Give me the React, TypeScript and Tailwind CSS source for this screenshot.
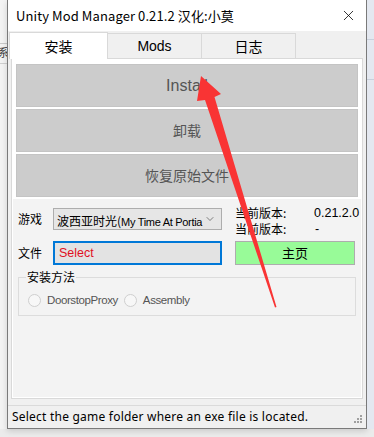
import { X, ChevronDown } from 'lucide-react';

const ui = { fontFamily: '"Noto Sans CJK SC", "Noto Sans", sans-serif' };
const ms = { fontFamily: '"Liberation Sans", "Noto Sans CJK SC", sans-serif' };

function BigButton({ label, latin }: { label: string; latin?: boolean }) {
  return (
    <div
      className={`h-[43px] bg-[#cccccc] border border-[#c4c4c4] flex items-center justify-center text-[#555555] ${latin ? 'text-[16px]' : 'text-[14px]'}`}
      style={latin ? ms : ui}
    >
      {label}
    </div>
  );
}

function Radio({ label }: { label: string }) {
  return (
    <div className="flex items-center gap-[6px]">
      <span className="w-[13px] h-[13px] rounded-full border border-[#cfcfcf] bg-[#f7f7f7]" />
      <span className="text-[11.5px] text-[#555555] tracking-[-0.4px]" style={ms}>{label}</span>
    </div>
  );
}

function Arrow() {
  return (
    <svg className="absolute left-0 top-0 pointer-events-none" width="374" height="437" viewBox="0 0 374 437">
      <polygon
        points="201,76 221,94 214.5,97 276.5,307 275,307.5 205,100 197,101"
        fill="#f93434"
      />
    </svg>
  );
}

export default function App() {
  return (
    <div className="relative w-[374px] h-[437px] overflow-hidden bg-[#ebebeb] flex" style={ui}>
      {/* desktop behind the window */}
      <div className="w-[7px] h-[429px] bg-[#f3f3f3] flex flex-col overflow-hidden">
        <div className="h-[44px] border-b border-[#c9c9c9]" />
        <div className="text-[11px] leading-[14px] text-[#333] whitespace-nowrap -ml-[2px] mt-[1px]">系吗</div>
        <div className="mt-[4px] border-b border-[#cfcfcf]" />
      </div>

      <div className="w-[360px] h-[429px] border-x border-b border-[#7a7a7a] bg-[#f0f0f0] flex flex-col shadow-[0_2px_6px_rgba(0,0,0,0.15)]">
        {/* title bar */}
        <div className="h-[31px] bg-white flex items-center justify-between pl-[8px] pr-[9px]">
          <span className="text-[13px] text-black tracking-[0.1px]">Unity Mod Manager 0.21.2 汉化:小莫</span>
          <X size={17} strokeWidth={1.1} className="text-black" />
        </div>

        {/* tabs */}
        <div className="flex items-end h-[27px] pl-[1px] relative z-10">
          <div className="w-[99px] h-[27px] bg-white border-x border-t border-[#d9d9d9] flex items-center justify-center text-[14px] text-black -mb-px">
            安装
          </div>
          <div className="w-[95px] h-[25px] -ml-px bg-[#f0f0f0] border border-b-0 border-[#d9d9d9] flex items-center justify-center text-[14px] text-black" style={ms}>
            Mods
          </div>
          <div className="w-[95px] h-[25px] -ml-px bg-[#f0f0f0] border border-b-0 border-[#d9d9d9] flex items-center justify-center text-[14px] text-black">
            日志
          </div>
        </div>

        {/* tab panel */}
        <div className="mx-[3px] h-[341px] border border-[#d9d9d9] bg-white p-[1px]">
          <div className="h-full bg-[#f3f3f3] flex flex-col">
            <div className="flex flex-col gap-[2px] bg-white px-[3px] pt-[4px] pb-[2px]">
              <BigButton label="Install" latin />
              <BigButton label="卸载" />
              <BigButton label="恢复原始文件" />
            </div>

            {/* game + version */}
            <div className="flex pl-[5px] pr-[7px] mt-[9px]">
              <div className="flex flex-col gap-[11px]">
                <div className="flex items-center gap-[11px]">
                  <span className="text-[12px] text-black w-[24px]">游戏</span>
                  <div className="w-[169px] h-[22px] bg-[#e6e6e6] border border-[#adadad] flex items-center pl-[3px] pr-[5px] justify-between">
                    <span className="text-black whitespace-nowrap">
                      <span className="text-[12px]">波西亚时光(</span>
                      <span className="text-[11px] tracking-[-0.3px]" style={ms}>My Time At Portia</span>
                    </span>
                    <ChevronDown size={12} strokeWidth={1.3} className="text-[#444] shrink-0" />
                  </div>
                </div>
                <div className="flex items-center gap-[11px]">
                  <span className="text-[12px] text-black w-[24px]">文件</span>
                  <div className="w-[169px] h-[24px] bg-[#e3e3e3] border-2 border-[#0078d7] flex items-center pl-[4px]">
                    <span className="text-[12.5px] text-[#e0101f]" style={ms}>Select</span>
                  </div>
                </div>
              </div>

              <div className="flex flex-col ml-[13px] flex-1">
                <div className="flex text-[12px] text-black leading-[16px] mt-[-3px]">
                  <div className="flex flex-col w-[79px]">
                    <span>当前版本:</span>
                    <span>当前版本:</span>
                  </div>
                  <div className="flex flex-col" style={ms}>
                    <span className="text-[12.5px]">0.21.2.0</span>
                    <span className="text-[12.5px] pl-[1px]">-</span>
                  </div>
                </div>
                <div className="mt-[4px] w-[120px] h-[24px] border border-[#adadad] bg-[#98fb98] flex items-center justify-center text-[13px] text-black">
                  主页
                </div>
              </div>
            </div>

            {/* install method */}
            <div className="mx-[5px] mt-[12px] h-[39px] border border-[#dcdcdc] relative pl-[9px] pt-[14px]">
              <span className="absolute left-[7px] top-[-9px] bg-[#f3f3f3] px-[1px] text-[12px] text-black leading-[16px]">安装方法</span>
              <div className="flex items-center gap-[6px]">
                <Radio label="DoorstopProxy" />
                <Radio label="Assembly" />
              </div>
            </div>
          </div>
        </div>

        {/* status bar */}
        <div className="mt-[6px] border-t border-[#dadada] flex-1 flex items-center justify-between pl-[4px] pr-[4px]">
          <span className="text-[12px] text-black tracking-[0.22px]" style={{ fontFamily: '"Noto Sans", sans-serif' }}>
            Select the game folder where an exe file is located.
          </span>
          <div className="grid grid-cols-3 gap-[1px] w-[8px] h-[8px] mt-[4px]">
            <span /><span /><span className="bg-[#a0a0a0]" />
            <span /><span className="bg-[#a0a0a0]" /><span className="bg-[#a0a0a0]" />
            <span className="bg-[#a0a0a0]" /><span className="bg-[#a0a0a0]" /><span className="bg-[#a0a0a0]" />
          </div>
        </div>
      </div>

      <div className="flex-1 h-[429px] bg-[#e4e8f0] flex flex-col">
        <div className="h-[40px] border-b border-[#c8d0dc]" />
        <div className="h-[40px] border-b border-[#c8d0dc]" />
      </div>

      <Arrow />
    </div>
  );
}
